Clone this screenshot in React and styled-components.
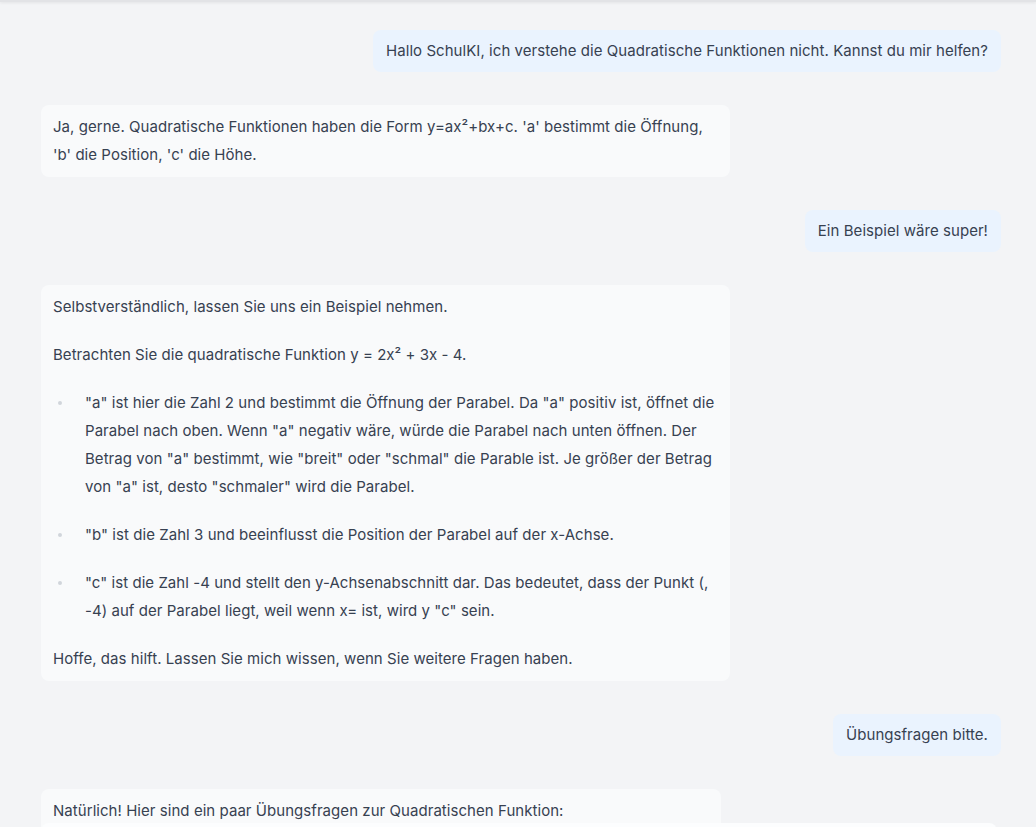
import React from "react";
import styled, { createGlobalStyle } from "styled-components";

const GlobalStyle = createGlobalStyle`
  html, body {
    margin: 0;
    padding: 0;
    background: #f3f4f6;
    font-family: Inter, "Noto Sans", "Liberation Sans", sans-serif;
    color: #374151;
  }
  * {
    box-sizing: border-box;
  }
`;

const Page = styled.div`
  height: 100vh;
  overflow: hidden;
  display: flex;
  flex-direction: column;
`;

const TopShadow = styled.div`
  height: 2px;
  flex: 0 0 auto;
  background: #e2e3e6;
  box-shadow: 0 1px 3px rgba(0, 0, 0, 0.08);
`;

const Messages = styled.div`
  display: flex;
  flex-direction: column;
  gap: 33px;
  padding: 28px 35px 0 41px;
`;

const Bubble = styled.div`
  align-self: ${(props) => (props.user ? "flex-end" : "flex-start")};
  width: ${(props) => props.width || "auto"};
  max-width: 689px;
  min-height: ${(props) => props.minHeight || "0"};
  padding: ${(props) => (props.user ? "7px 13px" : "8px 12px")};
  border-radius: 8px;
  background: ${(props) => (props.user ? "#eaf3fe" : "#f9fafb")};
  font-size: 15px;
  line-height: 28px;
  letter-spacing: 0.05px;
`;

const Paragraph = styled.p`
  margin: 0 0 20px;
  &:last-child {
    margin-bottom: 0;
  }
`;

const List = styled.ul`
  list-style: none;
  margin: 0 0 20px;
  padding: 0;
  display: flex;
  flex-direction: column;
  gap: 20px;
`;

const Item = styled.li`
  display: flex;
`;

const Dot = styled.span`
  flex: 0 0 32px;
  &::after {
    content: "";
    display: block;
    width: 4px;
    height: 4px;
    margin: 12px 0 0 5px;
    border-radius: 50%;
    background: #d1d5db;
  }
`;

const Composer = styled.div`
  position: fixed;
  left: 41px;
  right: 39px;
  bottom: -60px;
  height: 64px;
  border-radius: 8px;
  background: #fcfdfe;
`;

const BulletItem = ({ children }) => (
  <Item>
    <Dot />
    <span>{children}</span>
  </Item>
);

export default function App() {
  return (
    <Page>
      <GlobalStyle />
      <TopShadow />
      <Messages>
        <Bubble user>
          Hallo SchulKI, ich verstehe die Quadratische Funktionen nicht. Kannst
          du mir helfen?
        </Bubble>

        <Bubble>
          Ja, gerne. Quadratische Funktionen haben die Form y=ax²+bx+c. 'a'
          bestimmt die Öffnung, 'b' die Position, 'c' die Höhe.
        </Bubble>

        <Bubble user>Ein Beispiel wäre super!</Bubble>

        <Bubble>
          <Paragraph>Selbstverständlich, lassen Sie uns ein Beispiel nehmen.</Paragraph>
          <Paragraph>Betrachten Sie die quadratische Funktion y = 2x² + 3x - 4.</Paragraph>
          <List>
            <BulletItem>
              "a" ist hier die Zahl 2 und bestimmt die Öffnung der Parabel. Da
              "a" positiv ist, öffnet die Parabel nach oben. Wenn "a" negativ
              wäre, würde die Parabel nach unten öffnen. Der Betrag von "a"
              bestimmt, wie "breit" oder "schmal" die Parable ist. Je größer der
              Betrag von "a" ist, desto "schmaler" wird die Parabel.
            </BulletItem>
            <BulletItem>
              "b" ist die Zahl 3 und beeinflusst die Position der Parabel auf der
              x-Achse.
            </BulletItem>
            <BulletItem>
              "c" ist die Zahl -4 und stellt den y-Achsenabschnitt dar. Das
              bedeutet, dass der Punkt (, -4) auf der Parabel liegt, weil wenn x=
              ist, wird y "c" sein.
            </BulletItem>
          </List>
          <Paragraph>
            Hoffe, das hilft. Lassen Sie mich wissen, wenn Sie weitere Fragen
            haben.
          </Paragraph>
        </Bubble>

        <Bubble user>Übungsfragen bitte.</Bubble>

        <Bubble width="680px" minHeight="80px">
          <Paragraph>
            Natürlich! Hier sind ein paar Übungsfragen zur Quadratischen
            Funktion:
          </Paragraph>
        </Bubble>
      </Messages>
      <Composer />
    </Page>
  );
}
